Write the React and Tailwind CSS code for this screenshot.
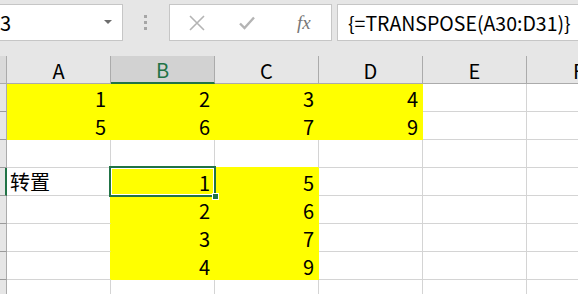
import React from "react";

const cols = ["A", "B", "C", "D", "E", "F"];

// y = yellow fill, v = value; bottom/right lines hidden where fill meets fill
const rows = [
  { n: 1, cells: [{ v: "1", y: 1 }, { v: "2", y: 1 }, { v: "3", y: 1 }, { v: "4", y: 1 }, {}, {}] },
  { n: 2, cells: [{ v: "5", y: 1 }, { v: "6", y: 1 }, { v: "7", y: 1 }, { v: "9", y: 1 }, {}, {}] },
  { n: 3, cells: [{}, { yb: 1 }, { yb: 1 }, {}, {}, {}] },
  { n: 4, sel: true, cells: [{ t: "转置", yr: 1 }, { v: "1", y: 1 }, { v: "5", y: 1 }, {}, {}, {}] },
  { n: 5, cells: [{ yr: 1 }, { v: "2", y: 1 }, { v: "6", y: 1 }, {}, {}, {}] },
  { n: 6, cells: [{ yr: 1 }, { v: "3", y: 1 }, { v: "7", y: 1 }, {}, {}, {}] },
  { n: 7, cells: [{ yr: 1 }, { v: "4", y: 1 }, { v: "9", y: 1 }, {}, {}, {}] },
  { n: 8, cells: [{}, {}, {}, {}, {}, {}] },
];

function Cell({ c }) {
  const base = "w-[104px] h-[28px] shrink-0 border-r border-b flex items-center";
  let cls = "bg-white border-[#d4d4d4]";
  if (c.y) cls = "bg-[#ffff00] border-[#ffff00]";
  else if (c.yb) cls = "bg-white border-r-[#d4d4d4] border-b-[#ffff00]";
  else if (c.yr) cls = "bg-white border-b-[#d4d4d4] border-r-[#ffff00]";
  return (
    <div className={`${base} ${cls}`}>
      {c.v && <span className="w-full text-right pr-[4px] pt-[2px]">{c.v}</span>}
      {c.t && <span className="pl-[3px] pt-[1px]">{c.t}</span>}
    </div>
  );
}

export default function App() {
  return (
    <div
      className="w-[578px] h-[294px] overflow-hidden bg-[#e6e6e6] relative text-[20px] leading-none text-black"
      style={{ fontFamily: '"Noto Sans CJK SC", "Noto Sans", sans-serif' }}
    >
      {/* formula bar */}
      <div className="h-[56px] flex items-start pt-[4px]">
        <div className="w-[123px] h-[37px] bg-white border border-l-0 border-[#c6c6c6] flex items-center justify-between pr-[10px]">
          <span className="pt-[1px]">3</span>
          <svg width="8" height="5" viewBox="0 0 8 5">
            <path d="M0 0h8L4 4z" fill="#6d6d6d" />
          </svg>
        </div>
        <div className="w-[46px] h-[37px] flex flex-col items-center justify-center gap-[3px] pr-[2px]">
          <div className="w-[3px] h-[3px] bg-[#a6a6a6]" />
          <div className="w-[3px] h-[3px] bg-[#a6a6a6]" />
          <div className="w-[3px] h-[3px] bg-[#a6a6a6]" />
        </div>
        <div className="w-[163px] h-[37px] bg-white border border-[#c6c6c6] flex items-center">
          <svg width="18" height="18" viewBox="0 0 18 18" className="ml-[18px]">
            <path d="M2 2L16 16M16 2L2 16" stroke="#b4b4b4" strokeWidth="1.6" />
          </svg>
          <svg width="16" height="16" viewBox="0 0 16 16" className="ml-[33px]">
            <path d="M1 8.5L5.5 13L15 2.5" stroke="#b4b4b4" strokeWidth="2.4" fill="none" />
          </svg>
          <span
            className="ml-[42px] italic text-[19px] text-[#777777]"
            style={{ fontFamily: '"Liberation Serif", serif' }}
          >
            fx
          </span>
        </div>
        <div className="ml-[5px] flex-1 h-[37px] bg-white border border-r-0 border-[#c6c6c6] flex items-center pl-[10px]">
          <span className="text-[19.5px] whitespace-nowrap">{"{=TRANSPOSE(A30:D31)}"}</span>
        </div>
      </div>

      {/* column headers */}
      <div className="flex h-[28px]">
        <div className="w-[7px] shrink-0 border-r border-b border-[#ababab] bg-[#dadada]" />
        {cols.map((c) => (
          <div
            key={c}
            className={`w-[104px] shrink-0 h-[28px] flex items-center justify-center border-r ${
              c === "B"
                ? "bg-[#d2d2d2] text-[#217346] border-b-2 border-b-[#217346] border-r-[#ababab]"
                : "border-b border-[#ababab]"
            }`}
          >
            <span className="pt-[2px]">{c}</span>
          </div>
        ))}
      </div>

      {/* rows */}
      {rows.map((r) => (
        <div key={r.n} className="flex">
          <div
            className={`w-[7px] h-[28px] shrink-0 border-b border-[#9b9b9b] bg-[#e6e6e6] ${
              r.sel ? "border-r-2 border-r-[#217346]" : "border-r border-r-[#ababab]"
            }`}
          />
          {r.cells.map((c, i) => (
            <Cell key={i} c={c} />
          ))}
        </div>
      ))}

      {/* active cell outline */}
      <div className="absolute left-[109px] top-[166px] w-[107px] h-[31px] border-2 border-[#217346]">
        <div className="w-full h-full border border-white" />
        <div className="absolute right-[-5px] bottom-[-5px] w-[7px] h-[7px] bg-[#217346] border border-white" />
      </div>
    </div>
  );
}
